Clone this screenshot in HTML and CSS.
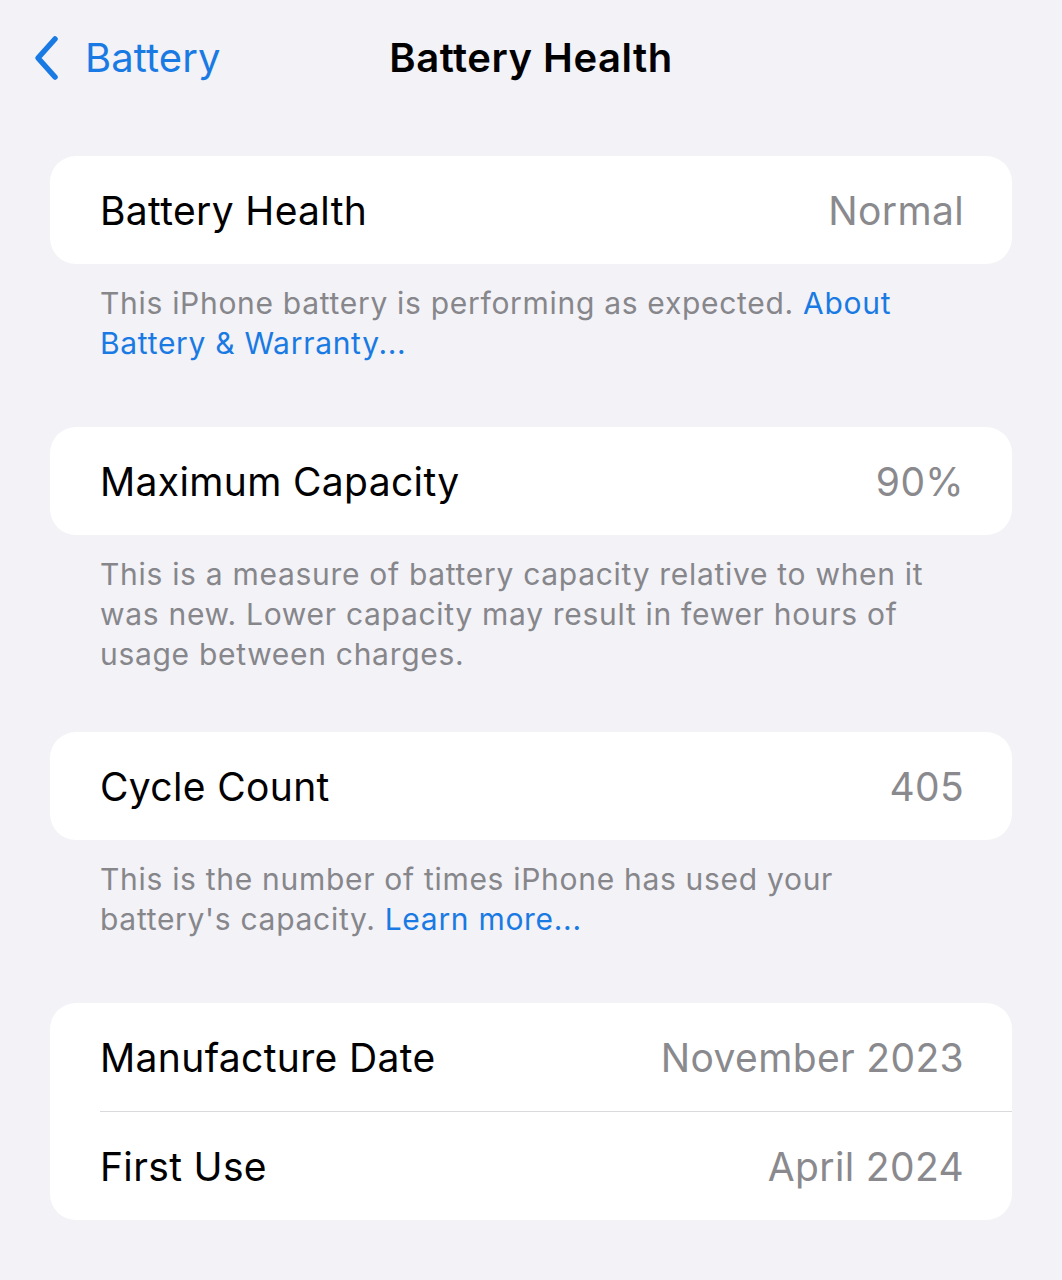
FILE: index.html
```html
<!DOCTYPE html>
<html>
<head>
<meta charset="utf-8">
<link rel="stylesheet" href="styles.css">
</head>
<body>
<header class="nav">
  <div class="back">
    <svg class="chev" width="30" height="48" viewBox="0 0 30 48"><path d="M24 5 L7 24 L24 43" fill="none" stroke="#1a7ae3" stroke-width="5.5" stroke-linecap="round" stroke-linejoin="round"/></svg>
    <span class="back-label">Battery</span>
  </div>
  <h1 class="title">Battery Health</h1>
</header>
<main class="content">
  <section class="group">
    <div class="card">
      <div class="row"><span class="label">Battery Health</span><span class="value">Normal</span></div>
    </div>
    <p class="footer">This iPhone battery is performing as expected. <span class="link">About Battery &amp; Warranty...</span></p>
  </section>
  <section class="group tight">
    <div class="card">
      <div class="row"><span class="label">Maximum Capacity</span><span class="value">90%</span></div>
    </div>
    <p class="footer">This is a measure of battery capacity relative to when it was new. Lower capacity may result in fewer hours of usage between charges.</p>
  </section>
  <section class="group">
    <div class="card">
      <div class="row"><span class="label">Cycle Count</span><span class="value">405</span></div>
    </div>
    <p class="footer">This is the number of times iPhone has used your battery's capacity. <span class="link">Learn more...</span></p>
  </section>
  <section class="group">
    <div class="card">
      <div class="row"><span class="label">Manufacture Date</span><span class="value">November 2023</span></div>
      <div class="row divided"><span class="label">First Use</span><span class="value">April 2024</span></div>
    </div>
  </section>
</main>
</body>
</html>
```

FILE: styles.css
```css
* { box-sizing: border-box; }
html, body {
  margin: 0;
  padding: 0;
  background: #f2f2f7;
  font-family: Inter, "Noto Sans", sans-serif;
  -webkit-font-smoothing: antialiased;
}
body { width: 1062px; height: 1280px; overflow: hidden; }

.nav {
  position: relative;
  height: 116px;
  display: flex;
  align-items: center;
  justify-content: center;
}
.back {
  position: absolute;
  left: 31px;
  top: 33px;
  display: flex;
  align-items: center;
  gap: 24px;
}
.chev { display: block; }
.back-label {
  color: #1a7ae3;
  font-size: 40px;
  letter-spacing: 0.1px;
}
.title {
  margin: 0 0 2px 0;
  font-size: 40px;
  font-weight: 600;
  color: #000;
  letter-spacing: 0.5px;
}

.content {
  padding: 40px 50px 0 50px;
}
.group { margin-bottom: 64px; }
.group.tight { margin-bottom: 58px; }
.card {
  background: #fff;
  border-radius: 26px;
  overflow: hidden;
}
.row {
  height: 108px;
  padding: 0 48px 0 50px;
  display: flex;
  align-items: center;
  justify-content: space-between;
  font-size: 39px;
  letter-spacing: 0.35px;
}
.row.divided {
  height: 109px;
  border-top: 1px solid #dadade;
  margin-left: 50px;
  padding-left: 0;
}
.label { color: #000; }
.value { color: #8a8a8e; }

.footer {
  margin: 19px 50px 0 50px;
  font-size: 30px;
  line-height: 40px;
  color: #86868b;
  letter-spacing: 0.7px;
}
.link { color: #1a7ae3; }
```
